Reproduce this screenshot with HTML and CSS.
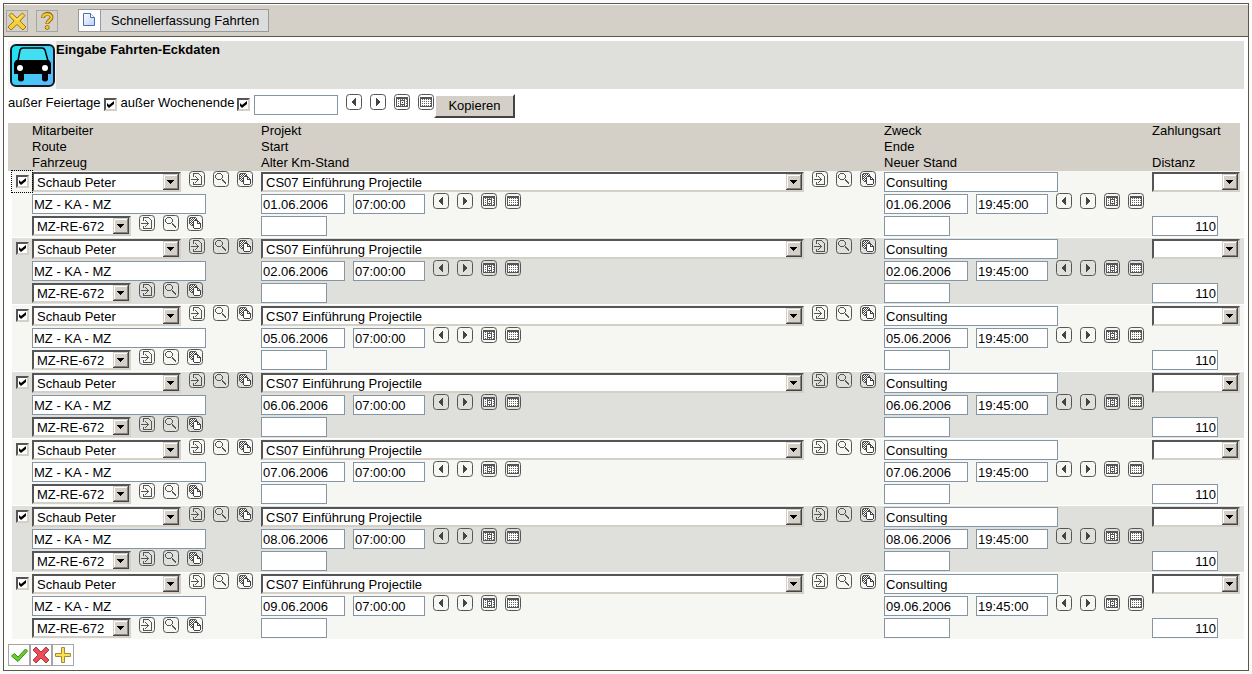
FILE: index.html
```html
<!DOCTYPE html>
<html lang="de">
<head>
<meta charset="utf-8">
<title>Schnellerfassung Fahrten</title>
<link rel="stylesheet" href="styles.css">
</head>
<body>
<svg class="sprite" aria-hidden="true">
  <defs>
    <pattern id="dots" width="2" height="2" patternUnits="userSpaceOnUse">
      <rect width="2" height="2" fill="#fff"/><rect width="1" height="1" fill="#444"/><rect x="1" y="1" width="1" height="1" fill="#444"/>
    </pattern>
    <linearGradient id="sky" x1="0" y1="0" x2="1" y2="1"><stop offset="0" stop-color="#19e6ee"/><stop offset="1" stop-color="#62b4ff"/></linearGradient>
    <linearGradient id="paper" x1="0" y1="0" x2="1" y2="1"><stop offset="0" stop-color="#fff"/><stop offset="1" stop-color="#b9d0f4"/></linearGradient>
  </defs>
  <symbol id="frame" viewBox="0 0 16 16"><rect x=".5" y=".5" width="15" height="15" rx="3" fill="none" stroke="#555"/></symbol>
  <symbol id="prev" viewBox="0 0 16 16"><use href="#frame"/><path d="M9 4h1v8H9zM8 5h1v6H8zM7 6h1v4H7zM6 7h1v2H6z" fill="#444"/></symbol>
  <symbol id="next" viewBox="0 0 16 16"><use href="#frame"/><path d="M6 4h1v8H6zM7 5h1v6H7zM8 6h1v4H8zM9 7h1v2H9z" fill="#444"/></symbol>
  <symbol id="grid" viewBox="0 0 16 16"><use href="#frame"/><path d="M2 3h12v10H2z" fill="#555"/><path d="M3 5h10v7H3z" fill="#fff"/><path d="M4 5.500h9M4 7.500h9M4 9.500h9M4 11.500h9" stroke="#666" stroke-dasharray="1 1"/></symbol>
  <symbol id="today" viewBox="0 0 16 16"><use href="#grid"/><path d="M6 6h5v5H6z" fill="#555"/><path d="M7 7h3v3H7z" fill="#fff"/><path d="M8 8h1v1H8z" fill="#333"/></symbol>
  <symbol id="open" viewBox="0 0 16 16"><use href="#frame"/><path d="M4 2h6v1H4zM4 3h1v3H4zM4 11h1v3H4zM4 13h9v1H4zM12 5h1v8h-1zM10 3h1v1h-1zM11 4h1v1h-1zM2 8h7v1H2zM6 5h1v1H6zM7 6h1v1H7zM8 7h1v1H8zM9 8h1v1H9zM8 9h1v1H8zM7 10h1v1H7zM6 11h1v1H6z" fill="#555"/></symbol>
  <symbol id="search" viewBox="0 0 16 16"><use href="#frame"/><path d="M4 2h4v1H4zM3 3h1v1H3zM8 3h1v1H8zM2 4h1v3H2zM9 4h1v3H9zM3 7h1v1H3zM8 7h1v1H8zM4 8h4v1H4zM9 8h1v1H9zM9 9h2v1H9zM10 10h2v1h-2zM11 11h2v1h-2zM12 12h1v1h-1z" fill="#555"/></symbol>
  <symbol id="copy" viewBox="0 0 16 16"><use href="#frame"/><path d="M3 2h6v2h1v1H6v6H4v-1H3V9H2V3h1z" fill="url(#dots)"/><path d="M3 2h6v1H3zM2 3h1v6H2zM3 9h1v1H3zM4 10h2v1H4zM9 3h1v2H9z" fill="#555"/><path d="M7 5h4l3 3v6H7z" fill="#fff"/><path d="M7 5h4v1H7zM6 6h1v7H6zM7 13h6v1H7zM13 8h1v5h-1zM11 6h1v1h-1zM12 7h1v1h-1zM10 6h1v3h-1zM11 8h2v1h-2z" fill="#444"/></symbol>
</svg>

<main class="window">
  <nav class="toolbar">
    <button class="tool" type="button" aria-label="Schließen"><svg viewBox="0 0 20 20"><path d="M2 4.500L4.500 2 10 7l5.500-5L18 4.500 13 10l6 6-3 3-6-5.500L4 19l-3-3 6-6z" fill="#f6cf3c" stroke="#a07808"/><path d="M4.500 4L10 9l5.500-5" fill="none" stroke="#ffec91"/></svg></button>
    <button class="tool" type="button" aria-label="Hilfe"><svg viewBox="0 0 20 20"><path d="M6 7C6 1.500 15 1.500 14.500 6.500c-.3 3-4.300 3-4.300 6.500" fill="none" stroke="#957112" stroke-width="4"/><path d="M6 6.500C6 2 14.800 2 14.500 6.500c-.3 2.800-4.300 3-4.300 6" fill="none" stroke="#f5cd3d" stroke-width="2"/><circle cx="10.200" cy="16.500" r="2" fill="#f5cd3d" stroke="#957112"/></svg></button>
    <button class="tab" type="button"><span class="tab-icon"><svg viewBox="0 0 14 16"><path d="M1.500 1.500h7l4 4v8h-11z" fill="url(#paper)" stroke="#4a6fb5"/><path d="M8.500 1.500v4h4" fill="#fff" stroke="#4a6fb5"/></svg></span><span class="tab-text">Schnellerfassung Fahrten</span></button>
  </nav>

  <section class="content">
    <header class="heading">
      <svg class="car" viewBox="0 0 48 48" aria-hidden="true">
        <rect width="48" height="48" fill="#f4f4f4"/>
        <rect x="3" y="4" width="43" height="41" rx="5" fill="url(#sky)" stroke="#101820" stroke-width="2"/>
        <path d="M10 20l2-11q1-2 3-2h19q2 0 3 2l3 11" fill="#42dff2" stroke="#000" stroke-width="1.500"/>
        <path d="M8 19h33l2 3v11h-3v6q-3 3-6 0v-6H16v6q-3 3-6 0v-6H6V22z"/>
        <circle cx="12" cy="27" r="3" fill="#fff"/><circle cx="37" cy="27" r="3" fill="#fff"/>
      </svg>
      <h1>Eingabe Fahrten-Eckdaten</h1>
    </header>

    <form class="copybar">
      <label for="feiertage">außer Feiertage</label><input class="check" id="feiertage" type="checkbox" checked>
      <label for="wochenende">außer Wochenende</label><input class="check" id="wochenende" type="checkbox" checked>
      <input class="field date" type="text" aria-label="Datum">
      <span class="icons" id="copy-icons"></span>
      <button class="copy-button" type="button">Kopieren</button>
    </form>

    <table class="trips">
      <colgroup><col class="c-check"><col class="c-person"><col><col class="c-end"><col class="c-pay"></colgroup>
      <thead>
        <tr>
          <th></th>
          <th>Mitarbeiter<br>Route<br>Fahrzeug</th>
          <th>Projekt<br>Start<br>Alter Km-Stand</th>
          <th>Zweck<br>Ende<br>Neuer Stand</th>
          <th>Zahlungsart<br><br>Distanz</th>
        </tr>
      </thead>
      <tbody id="rows"></tbody>
    </table>

    <footer class="actions">
      <button type="button" aria-label="Speichern"><svg viewBox="0 0 20 20"><path d="M2.500 11l3-2.500L9 12l7.500-8 2 2L9 16.500z" fill="#62cf2c" stroke="#3a8a1c"/></svg></button>
      <button type="button" aria-label="Löschen"><svg viewBox="0 0 20 20"><path d="M5 2l5 5 5-5 3 3-5 5 5 5-3 3-5-5-5 5-3-3 5-5-5-5z" fill="#ef4a55" stroke="#96434a"/></svg></button>
      <button type="button" aria-label="Neu"><svg viewBox="0 0 20 20"><path d="M8.500 2.500h3v6h6v3h-6v6h-3v-6h-6v-3h6z" fill="#fbe052" stroke="#a08b3c"/></svg></button>
    </footer>
  </section>
</main>
<script src="rows.js"></script>
</body>
</html>
```
FILE: rows.js
```js
const labels = { open: "Öffnen", search: "Suchen", copy: "Kopie", prev: "Zurück", next: "Vor", today: "Heute", grid: "Kalender" };
const icons = names => names.map(n =>
  `<button class="icon" type="button" aria-label="${labels[n]}"><svg viewBox="0 0 16 16"><use href="#${n}"/></svg></button>`).join("");
const lookup = `<span class="icons">${icons(["open", "search", "copy"])}</span>`;
const calendar = icons(["prev", "next", "today", "grid"]);
const field = (size, label, value = "") =>
  `<input class="field ${size}" type="text" aria-label="${label}" value="${value}">`;
const select = (size, label, value) =>
  `<select class="select ${size}" aria-label="${label}"><option>${value}</option></select>`;
const line = html => `<div class="line">${html}</div>`;
const moment = (label, date, time) =>
  line(field("date", label, date) + field("time", label + " Uhrzeit", time) + `<span class="icons">${calendar}</span>`);

document.getElementById("copy-icons").innerHTML = calendar;
document.getElementById("rows").innerHTML = ["01", "02", "05", "06", "07", "08", "09"].map((day, i) => {
  const date = day + ".06.2006";
  return `<tr>
    <td><span class="pick${i ? "" : " focused"}"><input class="check" type="checkbox" aria-label="Fahrt ${date}" checked></span></td>
    <td>${line(select("person", "Mitarbeiter", "Schaub Peter") + lookup)}${line(field("long", "Route", "MZ - KA - MZ"))}${line(select("car-select", "Fahrzeug", "MZ-RE-672") + lookup)}</td>
    <td class="trip">${line(select("project", "Projekt", "CS07 Einführung Projectile") + lookup)}${moment("Start", date, "07:00:00")}${line(field("km", "Alter Km-Stand"))}</td>
    <td>${line(field("long", "Zweck", "Consulting"))}${moment("Ende", date, "19:45:00")}${line(field("km", "Neuer Stand"))}</td>
    <td>${line(select("pay", "Zahlungsart", ""))}${line("")}${line(field("km number", "Distanz", "110"))}</td>
  </tr>`;
}).join("");
```
FILE: styles.css
```css
* { box-sizing: border-box; }
body {
  margin: 0;
  padding: 3px;
  background: #fbfbff;
  color: #000;
  font: 13px/16px "Liberation Sans", Arial, sans-serif;
}
button, input, select { font: inherit; color: inherit; margin: 0; }
button { padding: 0; }
svg { display: block; }
.sprite { position: absolute; width: 0; height: 0; }

.window { border: 1px solid #5a5a40; background: #fff; }
.toolbar {
  display: flex;
  align-items: center;
  gap: 8px;
  height: 33px;
  padding: 0 2px;
  border-top: 1px solid #fff;
  border-bottom: 1px solid #5a5a40;
  background: #d4d0c8;
}
.tool {
  width: 22px;
  height: 22px;
  border: 1px solid #a5a5a5;
  background: #d4d0c8;
}
.tool svg { width: 20px; height: 20px; }
.tab {
  display: flex;
  height: 23px;
  margin-left: 12px;
  border: 1px solid #999;
  background: #dcdcdc;
}
.tab-icon { width: 22px; height: 21px; padding: 2px 3px; border-right: 1px solid #999; background: #fff; }
.tab-icon svg { width: 14px; height: 16px; }
.tab-text { padding: 3px 9px 2px 10px; }

.content { padding: 4px; }
.heading { display: flex; height: 48px; background: #dfe0dc; }
.car { width: 48px; height: 48px; }
h1 { margin: 0; padding-top: 1px; font-size: 13px; line-height: 16px; font-weight: bold; }

.copybar { display: flex; align-items: flex-start; gap: 3px; height: 34px; padding-top: 6px; }
.copybar .check { margin: 3px 1px 0 0; }
.copybar .icons { margin-left: 5px; }
.copy-button {
  height: 24px;
  padding: 0 12px;
  margin: -1px 0 0 -3px;
  border: 2px solid;
  border-color: #fff #444 #444 #fff;
  background: #d4d0c8;
}

.check {
  appearance: none;
  flex: none;
  width: 13px;
  height: 13px;
  border: 2px solid;
  border-color: #555 #d4d0c8 #d4d0c8 #555;
  background: #fff;
}
.check:checked {
  background: #fff url("data:image/svg+xml,%3Csvg xmlns='http://www.w3.org/2000/svg' viewBox='0 0 9 9'%3E%3Cpath d='M1 3l2 2 5-4v3L3 8 1 6z'/%3E%3C/svg%3E") center / 9px 9px no-repeat;
}

.trips { width: 100%; table-layout: fixed; border-spacing: 0; }
.c-check { width: 24px; }
.c-person { width: 229px; }
.c-end { width: 268px; }
.c-pay { width: 92px; }
th, td { padding: 0; text-align: left; vertical-align: top; background-clip: padding-box; }
th { font-weight: normal; line-height: 16px; background-color: #d4d0c8; }
th:last-child { border-right: 4px solid transparent; }
td { padding: 1px 0; border-bottom: 1px solid #fff; background-color: #f6f7f3; }
tr:nth-child(even) td { background-color: #dfe0dc; }
td:first-child { padding-top: 0; border-left: 4px solid transparent; }
.trip { padding-right: 8px; }
.pick { display: flex; height: 21px; padding: 4px; }
.focused { outline: 1px dotted #000; }

.line { display: flex; align-items: flex-start; gap: 8px; height: 20px; }
.line + .line { margin-top: 2px; }
.icons { display: flex; gap: 8px; margin-top: -1px; }
.icon { width: 16px; height: 16px; border: 0; background: none; }
.icon svg { width: 16px; height: 16px; }

.field { height: 20px; padding: 0 1px; border: 1px solid #8496a5; background: #fff; }
.date { width: 84px; }
.time { width: 72px; }
.km { width: 66px; }
.long { width: 174px; }
.number { text-align: right; }

.select {
  appearance: none;
  height: 20px;
  padding: 1px 20px 0 3px;
  border: 2px solid;
  border-color: #555 #d4d0c8 #d4d0c8 #555;
  border-radius: 0;
  background: #fff url("data:image/svg+xml,%3Csvg xmlns='http://www.w3.org/2000/svg' viewBox='0 0 16 16' shape-rendering='crispEdges'%3E%3Cpath fill='%23d4d0c8' d='M0 0h16v16H0z'/%3E%3Cpath fill='%23fff' d='M1 1h13v1H2v12H1z'/%3E%3Cpath fill='%23444' d='M15 0h1v16H0v-1h15z'/%3E%3Cpath fill='%23848284' d='M14 1h1v14H1v-1h13z'/%3E%3Cpath d='M4 6h7v1H4zM5 7h5v1H5zM6 8h3v1H6zM7 9h1v1H7z'/%3E%3C/svg%3E") right center / 16px 16px no-repeat;
}
.person { width: 149px; }
.car-select { width: 99px; }
.project { flex: 1; min-width: 0; }
.pay { width: 88px; }

.actions { display: flex; padding-top: 4px; }
.actions button { width: 22px; height: 22px; border: 1px solid #a5a5a5; background: #fff; }
.actions svg { width: 20px; height: 20px; }
```
